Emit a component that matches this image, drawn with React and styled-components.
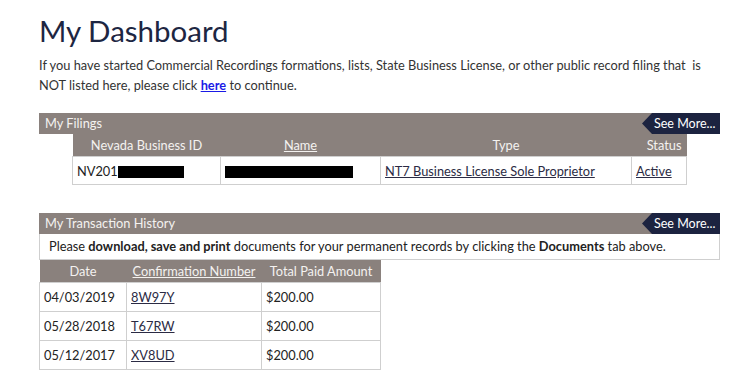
import React from 'react';
import styled, { createGlobalStyle } from 'styled-components';

const GlobalStyle = createGlobalStyle`
  body {
    margin: 0;
    background: #fff;
    font-family: Lato, "Open Sans", sans-serif;
    color: #333;
  }
`;

const filings = [
    { id: 'NV201', type: 'NT7 Business License Sole Proprietor', status: 'Active' },
];

const transactions = [
    { date: '04/03/2019', conf: '8W97Y', amount: '$200.00' },
    { date: '05/28/2018', conf: 'T67RW', amount: '$200.00' },
    { date: '05/12/2017', conf: 'XV8UD', amount: '$200.00' },
];

const App = () => {
    return (
        <Page>
            <GlobalStyle />
            <Title>My Dashboard</Title>
            <Intro>
                If you have started Commercial Recordings formations, lists, State Business License, or other public record filing that&nbsp; is
                <br />
                NOT listed here, please click <a href="#">here</a> to continue.
            </Intro>

            <Section>
                <Bar>
                    <span>My Filings</span>
                    <SeeMore>See More...</SeeMore>
                </Bar>
                <Table $indent={33} $width={614}>
                    <colgroup>
                        <col style={{ width: 148 }} />
                        <col style={{ width: 160 }} />
                        <col style={{ width: 251 }} />
                        <col style={{ width: 55 }} />
                    </colgroup>
                    <thead>
                        <tr>
                            <Th>Nevada Business ID</Th>
                            <Th><u>Name</u></Th>
                            <Th>Type</Th>
                            <Th $align="right">Status</Th>
                        </tr>
                    </thead>
                    <tbody>
                        {filings.map((f) => (
                            <tr key={f.id}>
                                <Td $h={27}>{f.id}<Redact $w={66} /></Td>
                                <Td $h={27}><Redact $w={128} /></Td>
                                <Td $h={27}><Link href="#">{f.type}</Link></Td>
                                <Td $h={27}><Link href="#">{f.status}</Link></Td>
                            </tr>
                        ))}
                    </tbody>
                </Table>
            </Section>

            <Section $top={28}>
                <Bar>
                    <span>My Transaction History</span>
                    <SeeMore>See More...</SeeMore>
                </Bar>
                <Notice>
                    Please <b>download, save and print</b> documents for your permanent records by clicking the <b>Documents</b> tab above.
                </Notice>
                <Table $indent={0} $width={341}>
                    <colgroup>
                        <col style={{ width: 87 }} />
                        <col style={{ width: 135 }} />
                        <col style={{ width: 119 }} />
                    </colgroup>
                    <thead>
                        <tr>
                            <Th>Date</Th>
                            <Th><u>Confirmation Number</u></Th>
                            <Th>Total Paid Amount</Th>
                        </tr>
                    </thead>
                    <tbody>
                        {transactions.map((t) => (
                            <tr key={t.conf}>
                                <Td $h={28}>{t.date}</Td>
                                <Td $h={28}><Link href="#">{t.conf}</Link></Td>
                                <Td $h={28}>{t.amount}</Td>
                            </tr>
                        ))}
                    </tbody>
                </Table>
            </Section>
        </Page>
    );
};

export default App;

const Page = styled.div`
    padding: 13px 30px 0 39px;
    width: 681px;
`;

const Title = styled.h1`
    margin: 0;
    font-size: 29.5px;
    font-weight: 400;
    color: #1d2642;
    line-height: 36px;
`;

const Intro = styled.p`
    margin: 6px 0 0;
    font-size: 12.8px;
    line-height: 20px;
    color: #333;
    a {
        color: #1a1ae6;
        font-weight: 700;
    }
`;

const Section = styled.div`
    margin-top: ${(p) => p.$top ?? 18}px;
    width: 681px;
`;

const Bar = styled.div`
    display: flex;
    justify-content: space-between;
    align-items: stretch;
    height: 21px;
    background: #8a817d;
    color: #f4f2f0;
    font-size: 12.8px;
    span {
        padding-left: 6px;
        line-height: 21px;
    }
`;

const SeeMore = styled.div`
    width: 66px;
    padding-left: 12px;
    background: #1c2340;
    color: #fff;
    font-size: 12.5px;
    line-height: 21px;
    clip-path: polygon(10px 0, 100% 0, 100% 100%, 10px 100%, 0 50%);
`;

const Table = styled.table`
    margin-left: ${(p) => p.$indent}px;
    width: ${(p) => p.$width}px;
    border-collapse: collapse;
    table-layout: fixed;
    font-size: 12.8px;
`;

const Th = styled.th`
    height: 22px;
    padding: 0 5px;
    background: #8a817d;
    color: #f4f2f0;
    font-weight: 400;
    text-align: ${(p) => p.$align ?? 'center'};
    white-space: nowrap;
`;

const Td = styled.td`
    height: ${(p) => p.$h}px;
    padding: 0 4px;
    border: 1px solid #cfcfcf;
    color: #222;
    text-align: left;
    white-space: nowrap;
`;

const Redact = styled.span`
    display: inline-block;
    vertical-align: middle;
    width: ${(p) => p.$w}px;
    height: 12px;
    background: #000;
`;

const Link = styled.a`
    color: #2b2b44;
    text-decoration: underline;
`;

const Notice = styled.div`
    height: 25px;
    line-height: 25px;
    padding-left: 9px;
    border: 1px solid #cfcfcf;
    border-top: none;
    font-size: 12.8px;
    color: #222;
    b {
        font-weight: 700;
    }
`;
